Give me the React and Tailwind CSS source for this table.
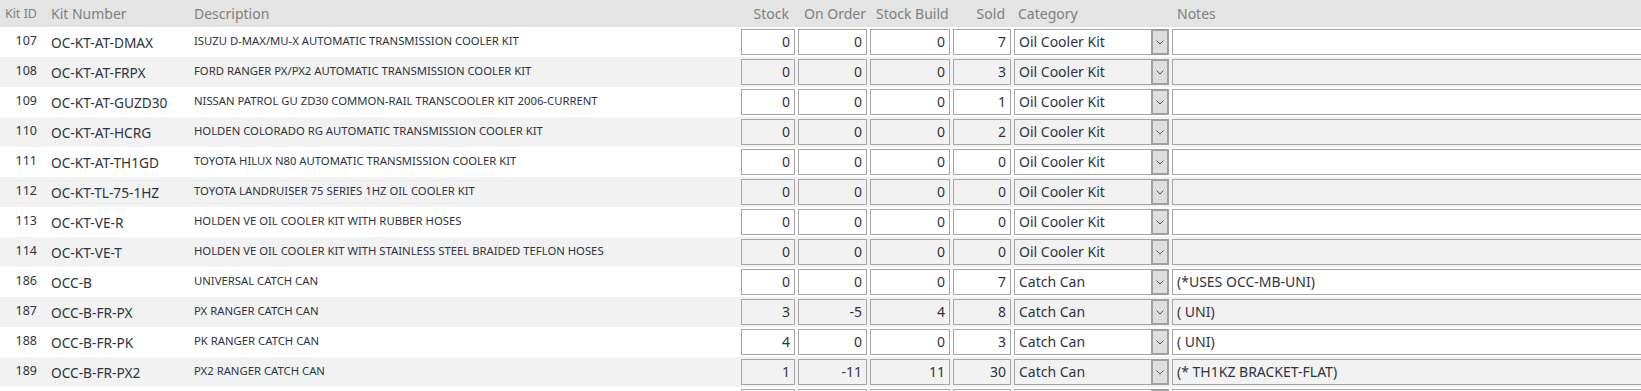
import React from 'react';

const rows = [
  { id: 107, kit: 'OC-KT-AT-DMAX', desc: 'ISUZU D-MAX/MU-X AUTOMATIC TRANSMISSION COOLER KIT', stock: 0, onOrder: 0, build: 0, sold: 7, cat: 'Oil Cooler Kit', notes: '' },
  { id: 108, kit: 'OC-KT-AT-FRPX', desc: 'FORD RANGER PX/PX2 AUTOMATIC TRANSMISSION COOLER KIT', stock: 0, onOrder: 0, build: 0, sold: 3, cat: 'Oil Cooler Kit', notes: '' },
  { id: 109, kit: 'OC-KT-AT-GUZD30', desc: 'NISSAN PATROL GU ZD30 COMMON-RAIL TRANSCOOLER KIT 2006-CURRENT', stock: 0, onOrder: 0, build: 0, sold: 1, cat: 'Oil Cooler Kit', notes: '' },
  { id: 110, kit: 'OC-KT-AT-HCRG', desc: 'HOLDEN COLORADO RG AUTOMATIC TRANSMISSION COOLER KIT', stock: 0, onOrder: 0, build: 0, sold: 2, cat: 'Oil Cooler Kit', notes: '' },
  { id: 111, kit: 'OC-KT-AT-TH1GD', desc: 'TOYOTA HILUX N80 AUTOMATIC TRANSMISSION COOLER KIT', stock: 0, onOrder: 0, build: 0, sold: 0, cat: 'Oil Cooler Kit', notes: '' },
  { id: 112, kit: 'OC-KT-TL-75-1HZ', desc: 'TOYOTA LANDRUISER 75 SERIES 1HZ OIL COOLER KIT', stock: 0, onOrder: 0, build: 0, sold: 0, cat: 'Oil Cooler Kit', notes: '' },
  { id: 113, kit: 'OC-KT-VE-R', desc: 'HOLDEN VE OIL COOLER KIT WITH RUBBER HOSES', stock: 0, onOrder: 0, build: 0, sold: 0, cat: 'Oil Cooler Kit', notes: '' },
  { id: 114, kit: 'OC-KT-VE-T', desc: 'HOLDEN VE OIL COOLER KIT WITH STAINLESS STEEL BRAIDED TEFLON HOSES', stock: 0, onOrder: 0, build: 0, sold: 0, cat: 'Oil Cooler Kit', notes: '' },
  { id: 186, kit: 'OCC-B', desc: 'UNIVERSAL CATCH CAN', stock: 0, onOrder: 0, build: 0, sold: 7, cat: 'Catch Can', notes: '(*USES OCC-MB-UNI)' },
  { id: 187, kit: 'OCC-B-FR-PX', desc: 'PX RANGER CATCH CAN', stock: 3, onOrder: -5, build: 4, sold: 8, cat: 'Catch Can', notes: '( UNI)' },
  { id: 188, kit: 'OCC-B-FR-PK', desc: 'PK RANGER CATCH CAN', stock: 4, onOrder: 0, build: 0, sold: 3, cat: 'Catch Can', notes: '( UNI)' },
  { id: 189, kit: 'OCC-B-FR-PX2', desc: 'PX2 RANGER CATCH CAN', stock: 1, onOrder: -11, build: 11, sold: 30, cat: 'Catch Can', notes: '(* TH1KZ BRACKET-FLAT)' },
  { id: '', kit: '', desc: '', stock: '', onOrder: '', build: '', sold: '', cat: '', notes: '' },
];

// numeric text box, right aligned like Access
const NumBox = ({ value, width }) => (
  <div className={`${width} h-[26px] shrink-0 border border-[#a6a6a6] text-right pr-[4px] pt-[3px] text-[14px] leading-[17px]`}>
    {value}
  </div>
);

const Row = ({ r, alt }) => (
  <div className={`flex h-[30px] items-start ${alt ? 'bg-[#f2f2f2]' : 'bg-white'}`}>
    <div className="w-[37px] shrink-0 text-right pt-[6px] text-[12.5px] leading-[16px]">{r.id}</div>
    <div className="w-[157px] shrink-0 pl-[14px] pt-[7px] text-[13.7px] leading-[17px] whitespace-nowrap">{r.kit}</div>
    <div className="w-[547px] shrink-0 pt-[6px] text-[11.3px] leading-[15px] whitespace-nowrap overflow-hidden">{r.desc}</div>
    <div className="flex gap-[3px] pt-[2px] grow min-w-0">
      <NumBox value={r.stock} width="w-[54px]" />
      <NumBox value={r.onOrder} width="w-[69px]" />
      <NumBox value={r.build} width="w-[80px]" />
      <NumBox value={r.sold} width="w-[58px]" />
      <div className="w-[155px] h-[26px] shrink-0 flex border border-[#a6a6a6] border-r-0">
        <div className="grow pl-[4px] pt-[3px] text-[14px] leading-[17px] whitespace-nowrap">{r.cat}</div>
        <div className="w-[18px] h-[26px] -mt-px shrink-0 bg-[#dedede] border-[2px] border-[#a0a0a0] flex items-center justify-center">
          <svg width="8" height="5" viewBox="0 0 8 5" fill="none">
            <path d="M0.5 0.5 L4 4 L7.5 0.5" stroke="#555" strokeWidth="1" />
          </svg>
        </div>
      </div>
      <div className="w-[480px] h-[26px] shrink-0 border border-[#a6a6a6] pl-[4px] pt-[3px] text-[14px] leading-[17px] whitespace-nowrap">
        {r.notes}
      </div>
    </div>
  </div>
);

export default function App() {
  return (
    <div
      className="w-[1641px] h-[391px] overflow-hidden bg-white text-[#2e3440]"
      style={{ fontFamily: '"Noto Sans", "Open Sans", sans-serif' }}
    >
      {/* header */}
      <div className="flex h-[27px] items-center bg-[#e4e4e4] text-[#808080] text-[14px] leading-[17px] whitespace-nowrap">
        <div className="w-[37px] shrink-0 text-right text-[12.5px]">Kit ID</div>
        <div className="w-[157px] shrink-0 pl-[14px]">Kit Number</div>
        <div className="w-[547px] shrink-0">Description</div>
        <div className="flex gap-[3px]">
          <div className="w-[54px] shrink-0 text-right pr-[6px]">Stock</div>
          <div className="w-[69px] shrink-0 pl-[6px]">On Order</div>
          <div className="w-[80px] shrink-0 pl-[6px]">Stock Build</div>
          <div className="w-[58px] shrink-0 text-right pr-[6px]">Sold</div>
          <div className="w-[155px] shrink-0 pl-[4px]">Category</div>
          <div className="w-[200px] shrink-0 pl-[5px]">Notes</div>
        </div>
      </div>
      {rows.map((r, i) => (
        <Row key={i} r={r} alt={i % 2 === 1} />
      ))}
    </div>
  );
}
